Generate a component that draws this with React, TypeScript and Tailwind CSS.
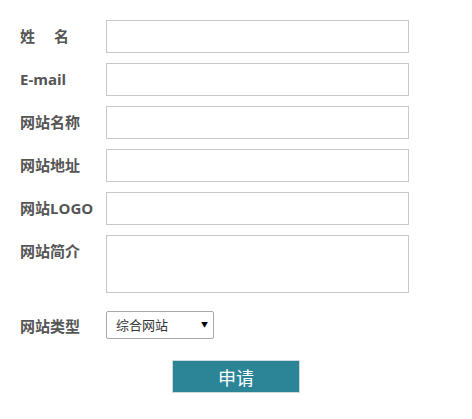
import { useState } from "react"

const font = { fontFamily: '"Open Sans", "Noto Sans CJK SC", sans-serif' }
const cjk = { fontFamily: '"Noto Sans CJK SC", sans-serif' }

function Row({ label, children, top }: { label: string; children: React.ReactNode; top?: boolean }) {
  return (
    <div className={`flex ${top ? "items-start" : "items-center"}`}>
      <div className="w-[86px] h-[33px] leading-[33px] text-[15px] font-bold text-[#555] whitespace-pre">{label}</div>
      {children}
    </div>
  )
}

export default function App() {
  const [type, setType] = useState("综合网站")

  return (
    <div className="w-[472px] h-[419px] bg-white pl-[20px] pt-[20px]" style={font}>
      <div className="flex flex-col gap-[10px]">
        <Row label={"姓　 名"}>
          <input className="w-[303px] h-[33px] border border-[#c8c8c8] outline-none px-2 text-sm" />
        </Row>
        <Row label="E-mail">
          <input className="w-[303px] h-[33px] border border-[#c8c8c8] outline-none px-2 text-sm" />
        </Row>
        <Row label="网站名称">
          <input className="w-[303px] h-[33px] border border-[#c8c8c8] outline-none px-2 text-sm" />
        </Row>
        <Row label="网站地址">
          <input className="w-[303px] h-[33px] border border-[#c8c8c8] outline-none px-2 text-sm" />
        </Row>
        <Row label="网站LOGO">
          <input className="w-[303px] h-[33px] border border-[#c8c8c8] outline-none px-2 text-sm" />
        </Row>
        <Row label="网站简介" top>
          <textarea className="w-[303px] h-[58px] border border-[#c8c8c8] outline-none px-2 text-sm resize-none" />
        </Row>
      </div>
      <div className="mt-[17px]">
        <Row label="网站类型">
          <div className="relative w-[108px] h-[28px] mt-[-3px]">
            <select
              value={type}
              onChange={(e) => setType(e.target.value)}
              className="appearance-none w-full h-full border border-[#a9a9a9] rounded-[2px] bg-white pl-[9px] text-[13px] text-[#333] outline-none"
              style={cjk}
            >
              <option>综合网站</option>
              <option>个人网站</option>
              <option>企业网站</option>
            </select>
            <span className="pointer-events-none absolute right-[6px] top-[10px] text-[7px] leading-none text-black">▼</span>
          </div>
        </Row>
      </div>
      <div className="mt-[17px] pl-[152px]">
        <button
          className="w-[128px] h-[33px] bg-[#2c8597] border border-[#cfd8da] text-white text-[18px] leading-none"
          style={cjk}
        >
          申请
        </button>
      </div>
    </div>
  )
}
